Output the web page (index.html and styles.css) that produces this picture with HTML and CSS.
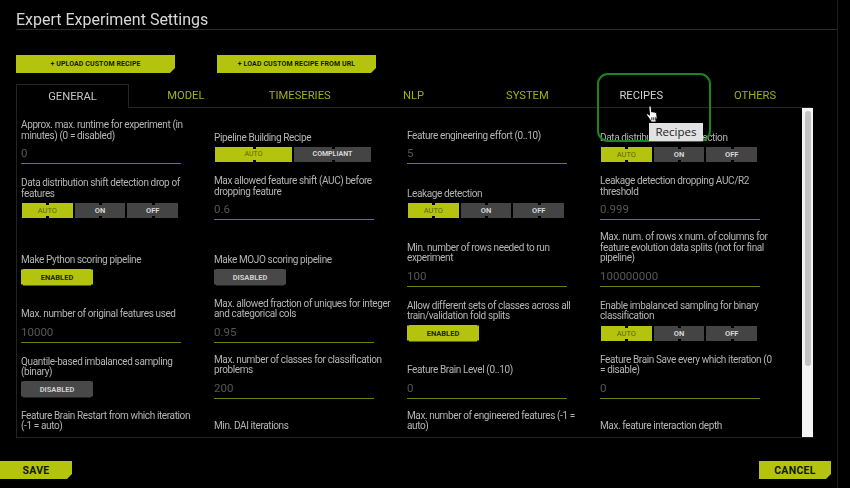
FILE: index.html
```html
<!DOCTYPE html>
<html>
<head>
  <meta charset="UTF-8">
  <title>Expert Experiment Settings</title>
  <link rel="stylesheet" href="styles.css">
</head>
<body>
  <div class="dialog">
    <h1 class="title">Expert Experiment Settings</h1>

    <div class="recipe-buttons">
      <button class="cut-btn small">+ UPLOAD CUSTOM RECIPE</button>
      <button class="cut-btn small">+ LOAD CUSTOM RECIPE FROM URL</button>
    </div>

    <div class="tabs">
      <div class="tab active">GENERAL</div>
      <div class="tab">MODEL</div>
      <div class="tab">TIMESERIES</div>
      <div class="tab">NLP</div>
      <div class="tab">SYSTEM</div>
      <div class="tab hover">RECIPES</div>
      <div class="tab">OTHERS</div>
    </div>

    <div class="panel">
      <div class="grid">
        <div class="field">
          <label>Approx. max. runtime for experiment (in minutes) (0 = disabled)</label>
          <div class="value">0</div>
        </div>
        <div class="field">
          <label>Pipeline Building Recipe</label>
          <div class="toggle two"><span class="on">AUTO</span><span>COMPLIANT</span></div>
        </div>
        <div class="field">
          <label>Feature engineering effort (0..10)</label>
          <div class="value">5</div>
        </div>
        <div class="field">
          <label>Data distribution shift detection</label>
          <div class="toggle"><span class="on">AUTO</span><span>ON</span><span>OFF</span></div>
        </div>

        <div class="field">
          <label>Data distribution shift detection drop of features</label>
          <div class="toggle"><span class="on">AUTO</span><span>ON</span><span>OFF</span></div>
        </div>
        <div class="field">
          <label>Max allowed feature shift (AUC) before dropping feature</label>
          <div class="value">0.6</div>
        </div>
        <div class="field">
          <label>Leakage detection</label>
          <div class="toggle"><span class="on">AUTO</span><span>ON</span><span>OFF</span></div>
        </div>
        <div class="field">
          <label>Leakage detection dropping AUC/R2 threshold</label>
          <div class="value">0.999</div>
        </div>

        <div class="field">
          <label>Make Python scoring pipeline</label>
          <div class="switch enabled">ENABLED</div>
        </div>
        <div class="field">
          <label>Make MOJO scoring pipeline</label>
          <div class="switch">DISABLED</div>
        </div>
        <div class="field">
          <label>Min. number of rows needed to run experiment</label>
          <div class="value">100</div>
        </div>
        <div class="field">
          <label>Max. num. of rows x num. of columns for feature evolution data splits (not for final pipeline)</label>
          <div class="value">100000000</div>
        </div>

        <div class="field">
          <label>Max. number of original features used</label>
          <div class="value">10000</div>
        </div>
        <div class="field">
          <label>Max. allowed fraction of uniques for integer and categorical cols</label>
          <div class="value">0.95</div>
        </div>
        <div class="field">
          <label>Allow different sets of classes across all train/validation fold splits</label>
          <div class="switch enabled">ENABLED</div>
        </div>
        <div class="field">
          <label>Enable imbalanced sampling for binary classification</label>
          <div class="toggle"><span class="on">AUTO</span><span>ON</span><span>OFF</span></div>
        </div>

        <div class="field">
          <label>Quantile-based imbalanced sampling (binary)</label>
          <div class="switch">DISABLED</div>
        </div>
        <div class="field">
          <label>Max. number of classes for classification problems</label>
          <div class="value">200</div>
        </div>
        <div class="field">
          <label>Feature Brain Level (0..10)</label>
          <div class="value">0</div>
        </div>
        <div class="field">
          <label>Feature Brain Save every which iteration (0 = disable)</label>
          <div class="value">0</div>
        </div>

        <div class="field">
          <label>Feature Brain Restart from which iteration (-1 = auto)</label>
        </div>
        <div class="field">
          <label>Min. DAI iterations</label>
        </div>
        <div class="field">
          <label>Max. number of engineered features (-1 = auto)</label>
        </div>
        <div class="field">
          <label>Max. feature interaction depth</label>
        </div>
      </div>
      <div class="scrollbar"><div class="thumb"></div></div>
    </div>

    <div class="footer">
      <button class="cut-btn big">SAVE</button>
      <button class="cut-btn big">CANCEL</button>
    </div>
  </div>

  <!-- callout drawn over the recipes tab -->
  <div class="callout"></div>
  <svg class="cursor" width="15" height="18" viewBox="0 0 14 17">
    <path d="M4 1.2c.8-.6 1.7 0 1.8.8l.4 4.6.4-.2c.6-.3 1.2 0 1.4.3.6-.3 1.2 0 1.4.5.7-.3 1.4.1 1.5.8l.4 3.4c.1 1.3-.3 2.4-.9 3.3l-.2 1.4H5.6l-.5-1.4L1.6 9.6c-.5-.7.3-1.7 1.2-1.2l1.4 1.3L3.6 2.4c0-.5.1-1 .4-1.2z" fill="#fff" stroke="#000" stroke-width=".9"/>
    <path d="M6.4 11.5v3M8.2 11.5v3M10 11.5v3" stroke="#000" stroke-width=".8" fill="none"/>
  </svg>
  <div class="tooltip">Recipes</div>
</body>
</html>
```

FILE: styles.css
```css
body {
  font-family: Roboto, "Liberation Sans", sans-serif;
  background-color: #000;
  color: #b4b4b4;
  margin: 0;
  width: 850px;
  height: 488px;
  overflow: hidden;
  position: relative;
}

.dialog {
  width: 838px;
  height: 488px;
  box-sizing: border-box;
  border-right: 1px solid #1c1c1c;
  filter: blur(.35px);
}

.title {
  margin: 0 0 25px 16px;
  height: 30px;
  box-sizing: border-box;
  border-bottom: 1px solid #2a2a2a;
  font-size: 16px;
  font-weight: 400;
  line-height: 40px;
  color: #d8d8d8;
}

.recipe-buttons {
  display: flex;
  gap: 42px;
  margin-left: 16px;
  margin-bottom: 11px;
}

.cut-btn {
  display: block;
  border: none;
  padding: 0;
  background-color: #b4c40e;
  color: #15180a;
  font-family: inherit;
  font-weight: 700;
  clip-path: polygon(0 0, 100% 0, 100% calc(100% - 5px), calc(100% - 5px) 100%, 0 100%);
}

.cut-btn.small {
  width: 159px;
  height: 18px;
  font-size: 7px;
  letter-spacing: .1px;
}

.cut-btn.big {
  height: 18px;
  width: 72px;
  font-size: 10.5px;
  letter-spacing: .3px;
}

.tabs {
  display: flex;
  margin-left: 16px;
  width: 796px;
  height: 23px;
  border-bottom: 1px solid #262626;
}

.tab {
  flex: 1;
  text-align: center;
  font-size: 11.2px;
  line-height: 23px;
  color: #a2b00f;
}

.tab.active {
  color: #c4c4c4;
  flex: none;
  width: 113px;
  height: 24px;
  box-sizing: border-box;
  border: 1px solid #262626;
  border-bottom: none;
  background-color: #000;
}

.tab.hover {
  color: #d0d0d0;
}

.panel {
  display: flex;
  margin-left: 16px;
  width: 797px;
  height: 330px;
  box-sizing: border-box;
  border-left: 1px solid #222;
  border-bottom: 1px solid #222;
  overflow: hidden;
}

.grid {
  flex: 1;
  display: grid;
  grid-template-columns: repeat(4, 193px);
  row-gap: 12px;
  align-items: end;
  align-content: start;
  padding: 12px 0 0 4px;
}

.field label {
  display: block;
  max-width: 178px;
  font-size: 10px;
  line-height: 10.5px;
  letter-spacing: -.38px;
}

.value {
  width: 160px;
  height: 20px;
  box-sizing: border-box;
  margin-top: 3px;
  border-bottom: 1px solid #6e7d16;
  font-size: 11.5px;
  line-height: 19px;
  color: #565656;
}

.toggle {
  display: flex;
  gap: 2px;
  width: 156px;
  height: 15px;
  margin: 4px 0 2px 1px;
}

.toggle.two span {
  font-size: 7px;
}

.toggle span {
  flex: 1;
  position: relative;
  background-color: #444;
  color: #d6d6d6;
  font-size: 7.5px;
  font-weight: 700;
  line-height: 15px;
  text-align: center;
}

.toggle span.on {
  background-color: #b4c40e;
  color: #5b6408;
  font-weight: 400;
}

.toggle span::before,
.toggle span::after {
  content: "";
  position: absolute;
  left: 50%;
  width: 3px;
  height: 2px;
  margin-left: -1px;
  background-color: #000;
}

.toggle span::before {
  top: 0;
}

.toggle span::after {
  bottom: 0;
}

.switch {
  width: 72px;
  height: 17px;
  margin: 3px 0 1px 0;
  background-color: #484848;
  color: #cfcfcf;
  font-size: 7.5px;
  font-weight: 700;
  line-height: 17px;
  text-align: center;
  clip-path: polygon(2px 0, calc(100% - 2px) 0, calc(100% - 2px) 1px, 100% 1px, 100% calc(100% - 1px), calc(100% - 2px) calc(100% - 1px), calc(100% - 2px) 100%, 2px 100%, 2px calc(100% - 1px), 0 calc(100% - 1px), 0 1px, 2px 1px);
}

.switch.enabled {
  background-color: #b4c40e;
  color: #23280a;
}

.scrollbar {
  flex: none;
  width: 11px;
  padding-top: 3px;
  box-sizing: border-box;
  background-color: #f4f4f4;
}

.thumb {
  width: 6px;
  height: 255px;
  margin-left: 3px;
  border-radius: 3px;
  background-color: #c4c4c4;
}

.footer {
  display: flex;
  justify-content: space-between;
  margin-top: 23px;
  padding-right: 6px;
}

/* overlays */
.callout {
  position: absolute;
  left: 597px;
  top: 73px;
  width: 110px;
  height: 65px;
  border: 2.5px solid #1c8522;
  border-radius: 11px;
}

.cursor {
  position: absolute;
  left: 645px;
  top: 105px;
}

.tooltip {
  position: absolute;
  left: 649px;
  top: 123px;
  width: 54px;
  height: 18px;
  background-color: #e2e2e2;
  color: #222;
  font-family: "Open Sans", sans-serif;
  font-size: 11.5px;
  line-height: 18px;
  text-align: center;
}
```
